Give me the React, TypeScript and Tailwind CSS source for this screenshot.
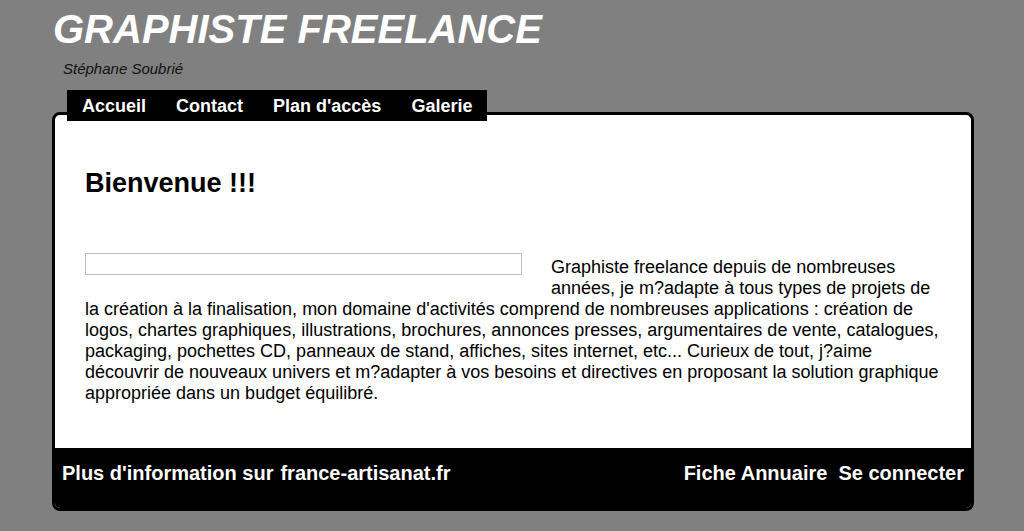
import React from "react";

const navItems = ["Accueil", "Contact", "Plan d'accès", "Galerie"];

const App = () => {
  return (
    <div className="min-h-screen bg-[#808080] font-['Liberation_Sans',Arial,sans-serif]">
      <div className="ml-[52px] w-[922px] pt-[6px]">
        <h1 className="pl-px text-[40px] font-bold italic leading-[46px] text-white">
          GRAPHISTE FREELANCE
        </h1>
        <p className="mt-[8px] pl-[11px] text-[15px] italic leading-[17px] text-[#111]">
          Stéphane Soubrié
        </p>

        <nav className="relative z-10 mt-[13px] ml-[15px] inline-flex h-[31px] items-center bg-black pt-px">
          {navItems.map((item) => (
            <a
              key={item}
              href="#"
              className="px-[15px] text-[18px] font-bold leading-[21px] text-white"
            >
              {item}
            </a>
          ))}
        </nav>

        <div className="-mt-[9px] overflow-hidden rounded-[8px] border-[3px] border-black bg-white">
          <div className="px-[30px] pt-[53px] pb-[44px] text-[18px] leading-[21px] text-black">
            <h2 className="text-[27px] font-bold leading-[31px]">Bienvenue !!!</h2>
            <div className="mt-[58px]">
              <div className="float-left -mt-[4px] mr-[29px] mb-[10px] h-[22px] w-[437px] border border-[#c0c0c0]" />
              <p>
                Graphiste freelance depuis de nombreuses années, je m?adapte à
                tous types de projets de la création à la finalisation, mon
                domaine d'activités comprend de nombreuses applications : création
                de logos, chartes graphiques, illustrations, brochures, annonces
                presses, argumentaires de vente, catalogues, packaging, pochettes
                CD, panneaux de stand, affiches, sites internet, etc... Curieux de
                tout, j?aime découvrir de nouveaux univers et m?adapter à vos
                besoins et directives en proposant la solution graphique
                appropriée dans un budget équilibré.
              </p>
            </div>
          </div>

          <footer className="flex h-[60px] justify-between bg-black px-[7px] pt-[14px] text-[20px] font-bold leading-[23px] text-white">
            <div className="flex gap-[7px]">
              <span>Plus d'information sur</span>
              <a href="#">france-artisanat.fr</a>
            </div>
            <div className="flex gap-[11px]">
              <a href="#">Fiche Annuaire</a>
              <a href="#">Se connecter</a>
            </div>
          </footer>
        </div>
      </div>
    </div>
  );
};

export default App;
